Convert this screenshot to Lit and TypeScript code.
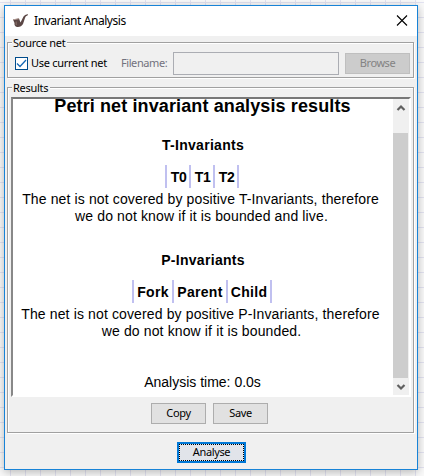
import { LitElement, html, css, svg } from "lit";
import { customElement, property } from "lit/decorators.js";
import { styleMap } from "lit/directives/style-map.js";

@customElement("group-box")
class GroupBox extends LitElement {
  @property() label = "";
  static styles = css`
    :host { display: block; }
    fieldset { position: relative; box-sizing: border-box; height: 100%; margin: 0; padding: 0; min-width: 0; border: 1px solid #a0a0a0; box-shadow: 1px 1px 0 #fff, inset 1px 1px 0 #fff; }
    .label { position: absolute; left: 4px; top: -7px; padding: 0 2px 0 1px; height: 14px; line-height: 14px; background: #f0f0f0; white-space: nowrap; letter-spacing: -.28px; }
  `;
  render() {
    return html`<fieldset><span class="label">${this.label}</span><slot></slot></fieldset>`;
  }
}

type Cell = { text: string; width: number };

@customElement("invariant-table")
class InvariantTable extends LitElement {
  @property({ type: Array }) cells: Cell[] = [];
  static styles = css`
    :host { display: flex; justify-content: center; height: 23px; }
    .row { display: flex; border-left: 2px solid #c0c0f0; }
    .cell { box-sizing: border-box; border-right: 2px solid #c0c0f0; text-align: center; white-space: nowrap; font: bold 14px/24px "Liberation Sans", Arial, sans-serif; letter-spacing: var(--cell-spacing, 0); padding-left: var(--cell-indent, 0); }
  `;
  render() {
    return html`<div class="row">${this.cells.map(
      (c) => html`<span class="cell" style=${styleMap({ width: `${c.width}px` })}>${c.text}</span>`
    )}</div>`;
  }
}

const chevron = (d: string) => html`<svg width="16" height="16" viewBox="0 0 16 16">${svg`<path d=${d} fill="none" stroke="#606060" stroke-width="2.2"/>`}</svg>`;

@customElement("app-root")
class AppRoot extends LitElement {
  static styles = css`
    * { box-sizing: border-box; }
    :host {
      display: block; width: 424px; height: 476px; padding: 5px 6px 6px 4px; box-sizing: border-box; overflow: hidden;
      font: 11px/14px "Noto Sans", "Open Sans", sans-serif; color: #000;
      background-color: #fafafa;
      background-image: linear-gradient(90deg, #e3e3f2 1px, transparent 1px), linear-gradient(#e3e3f2 1px, transparent 1px);
      background-size: 15px 15px; background-position: 10px 2px;
    }
    .window { width: 414px; height: 465px; border: 1px solid #1883d7; background: #f0f0f0; box-shadow: 0 2px 9px rgba(0,0,0,.28); display: flex; flex-direction: column; }
    .title { height: 30px; flex: none; background: #fff; display: flex; align-items: center; padding: 0 9px 0 7px; }
    .title .name { margin-left: 5px; flex: 1; font-size: 12px; letter-spacing: -.43px; }
    .source { margin: 6px 3px 0 2px; height: 36px; }
    .sourcerow { display: flex; align-items: center; height: 34px; padding: 8px 2px 1px 7px; }
    .check { width: 13px; height: 13px; border: 1px solid #004c8c; background: #fff; display: block; }
    .check svg { display: block; }
    .use { margin-left: 3px; width: 90px; white-space: nowrap; letter-spacing: -.28px; position: relative; top: -1px; }
    .file { width: 52px; color: #72727e; white-space: nowrap; letter-spacing: -.42px; position: relative; top: -1px; }
    .field { width: 166px; height: 23px; border: 1px solid #abadb3; }
    .btn { display: flex; align-items: center; justify-content: center; height: 21px; width: 55px; padding: 0 0 1px; border: 1px solid #adadad; background: #e1e1e1; font: inherit; color: #000; letter-spacing: -.35px; }
    .browse { width: 65px; margin-left: 6px; background: #ccc; border-color: #bfbfbf; color: #838383; letter-spacing: -.45px; }
    .results { margin: 9px 3px 0 2px; height: 346px; }
    .pane { margin: 9px 2px 0 3px; width: 400px; height: 300px; border: 2px solid #fff; border-top-color: #777; border-left-color: #888; background: #fff; display: flex; }
    .doc { flex: 1; font: 14px/17px "Liberation Sans", Arial, sans-serif; text-align: center; }
    .doc h1 { font-size: 18px; line-height: 14px; margin: 0 0 3px; white-space: nowrap; letter-spacing: .12px; padding-right: 1px; }
    .doc h2 { font-size: 14px; line-height: 17px; margin: 0; letter-spacing: .3px; }
    .doc p { margin: 0; white-space: nowrap; letter-spacing: .13px; padding-right: 3px; }
    .doc .lead { padding-right: 5px; }
    .t { padding-top: 21px; }
    .p { padding-top: 27px; }
    .doc invariant-table { margin: 11px 2px 3px 0; }
    .doc .transitions { --cell-indent: 1px; --cell-spacing: -.3px; }
    .doc .places { --cell-spacing: .3px; }
    .doc .time { padding-top: 34px; padding-right: 1px; letter-spacing: 0; }
    .scroll { width: 16px; height: 296px; background: #f0f0f0; display: flex; flex-direction: column; }
    .scroll svg { display: block; }
    .upper { height: 34px; flex: none; }
    .thumb { width: 15px; height: 245px; flex: none; background: #cdcdcd; }
    .lower { flex: 1; }
    .actions { display: flex; justify-content: center; gap: 7px; padding: 6px 2px 0 0; }
    .bottom { display: flex; padding: 9px 0 0 172px; }
    .primary { width: 69px; height: 21px; border: 2px solid #0078d7; padding: 0; background: #e1e4ea; }
    .primary span { display: block; width: 100%; height: 100%; border: 1px dotted #000; line-height: 14px; text-align: center; }
  `;
  render() {
    return html`<div class="window">
      <div class="title">
        <svg width="17" height="17" viewBox="0 0 17 17">
          <path d="M1 6.5 L7 5.5 L8.5 9.5 L11.5 3.5 Q12.5 1.5 16 1 L15.5 2.5 Q13.5 2.5 13 5 L11 11 Q9 14.5 5 14 Q2 13 2.5 10 Z" fill="#5b4745"/>
          <path d="M1.5 6.7 L7 5.7" stroke="#b39b94"/><path d="M4.2 8.5 V12" stroke="#8c716a"/>
        </svg>
        <span class="name">Invariant Analysis</span>
        <svg width="12" height="12" viewBox="0 0 12 12"><path d="M1 .5 L11 10.5 M11 .5 L1 10.5" stroke="#000" fill="none" stroke-width="1.1"/></svg>
      </div>
      <group-box class="source" label="Source net">
        <div class="sourcerow">
          <span class="check"><svg width="11" height="11" viewBox="0 0 11 11"><path d="M1 5.5 L4 8.5 L10 2" fill="none" stroke="#1769b5" stroke-width="1.3"/></svg></span>
          <span class="use">Use current net</span>
          <span class="file">Filename:</span>
          <span class="field"></span>
          <button class="btn browse">Browse</button>
        </div>
      </group-box>
      <group-box class="results" label="Results">
        <div class="pane">
          <div class="doc">
            <h1>Petri net invariant analysis results</h1>
            <h2 class="t">T-Invariants</h2>
            <invariant-table class="transitions" .cells=${[{ text: "T0", width: 24 }, { text: "T1", width: 24 }, { text: "T2", width: 24 }]}></invariant-table>
            <p class="lead">The net is not covered by positive T-Invariants, therefore</p>
            <p>we do not know if it is bounded and live.</p>
            <h2 class="p">P-Invariants</h2>
            <invariant-table class="places" .cells=${[{ text: "Fork", width: 40 }, { text: "Parent", width: 54 }, { text: "Child", width: 44 }]}></invariant-table>
            <p class="lead">The net is not covered by positive P-Invariants, therefore</p>
            <p>we do not know if it is bounded.</p>
            <p class="time">Analysis time: 0.0s</p>
          </div>
          <div class="scroll">
            <div class="upper">${chevron("M4.5 11 L8 7.5 L11.5 11")}</div>
            <div class="thumb"></div>
            <div class="lower">${chevron("M4.5 7 L8 10.5 L11.5 7")}</div>
          </div>
        </div>
        <div class="actions"><button class="btn">Copy</button><button class="btn">Save</button></div>
      </group-box>
      <div class="bottom"><button class="btn primary"><span>Analyse</span></button></div>
    </div>`;
  }
}
